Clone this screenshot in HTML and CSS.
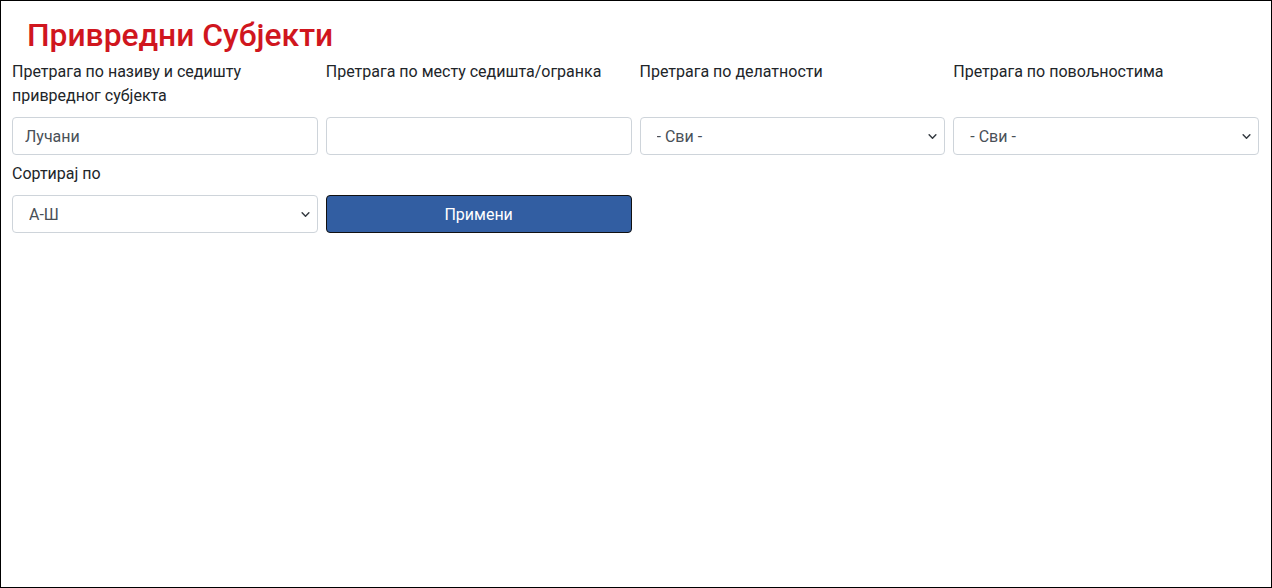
FILE: index.html
```html
<!DOCTYPE html>
<html lang="sr">
<head>
    <meta charset="UTF-8">
    <meta name="viewport" content="width=device-width, initial-scale=1.0">
    <title>Привредни Субјекти</title>
    <link rel="stylesheet" href="styles.css">
</head>
<body>
    <div class="page">
        <h1 class="page-title">Привредни Субјекти</h1>

        <form class="filters" id="filterForm">
            <div class="field">
                <label for="naziv">Претрага по називу и седишту привредног субјекта</label>
                <input type="text" id="naziv" class="control" value="Лучани">
            </div>
            <div class="field">
                <label for="mesto">Претрага по месту седишта/огранка</label>
                <input type="text" id="mesto" class="control">
            </div>
            <div class="field">
                <label for="delatnost">Претрага по делатности</label>
                <select id="delatnost" class="control select">
                    <option>- Сви -</option>
                </select>
            </div>
            <div class="field">
                <label for="povoljnosti">Претрага по повољностима</label>
                <select id="povoljnosti" class="control select">
                    <option>- Сви -</option>
                </select>
            </div>

            <div class="field">
                <label for="sort">Сортирај по</label>
                <select id="sort" class="control select">
                    <option>А-Ш</option>
                    <option>Ш-А</option>
                </select>
            </div>
            <div class="field">
                <button type="submit" class="btn-apply">Примени</button>
            </div>
        </form>
    </div>
</body>
</html>
```

FILE: styles.css
```css
html, body {
    margin: 0;
    padding: 0;
}
body {
    font-family: Roboto, "Liberation Sans", Arial, sans-serif;
    color: #212529;
    background: #fff;
}
.page {
    box-sizing: border-box;
    height: 588px;
    border: 1px solid #000;
    padding: 0 12px 0 11px;
}
.page-title {
    margin: 0;
    padding: 14px 0 0 15px;
    font-size: 31.8px;
    font-weight: 500;
    line-height: 40px;
    color: #d0161e;
}
.filters {
    display: grid;
    grid-template-columns: repeat(4, 1fr);
    column-gap: 8px;
    row-gap: 7px;
    margin-top: 5px;
}
.field {
    display: flex;
    flex-direction: column;
    justify-content: flex-end;
}
/* first row: labels sit at the top, controls line up at the bottom */
.filters .field:nth-child(-n+4) {
    justify-content: flex-start;
}
.field label {
    font-size: 16px;
    line-height: 24px;
    margin-bottom: 9px;
}
.field label + .control {
    margin-top: auto;
}
.control {
    box-sizing: border-box;
    width: 100%;
    height: 38px;
    padding: 6px 12px;
    font-family: inherit;
    font-size: 16px;
    color: #495057;
    background: #fff;
    border: 1px solid #ced4da;
    border-radius: 4px;
    outline: none;
}
.select {
    -webkit-appearance: none;
    appearance: none;
    padding-left: 16px;
    padding-right: 36px;
    background-image: url("data:image/svg+xml,%3csvg xmlns='http://www.w3.org/2000/svg' viewBox='0 0 16 16'%3e%3cpath fill='none' stroke='%23343a40' stroke-linecap='round' stroke-linejoin='round' stroke-width='2.6' d='M2 5l6 6 6-6'/%3e%3c/svg%3e");
    background-repeat: no-repeat;
    background-position: right 7px center;
    background-size: 9px 9px;
}
.btn-apply {
    box-sizing: border-box;
    width: 100%;
    height: 38px;
    font-family: inherit;
    font-size: 16px;
    font-weight: 400;
    color: #fff;
    background: #325ea2;
    border: 1px solid #111;
    border-radius: 4px;
    cursor: pointer;
}
```
